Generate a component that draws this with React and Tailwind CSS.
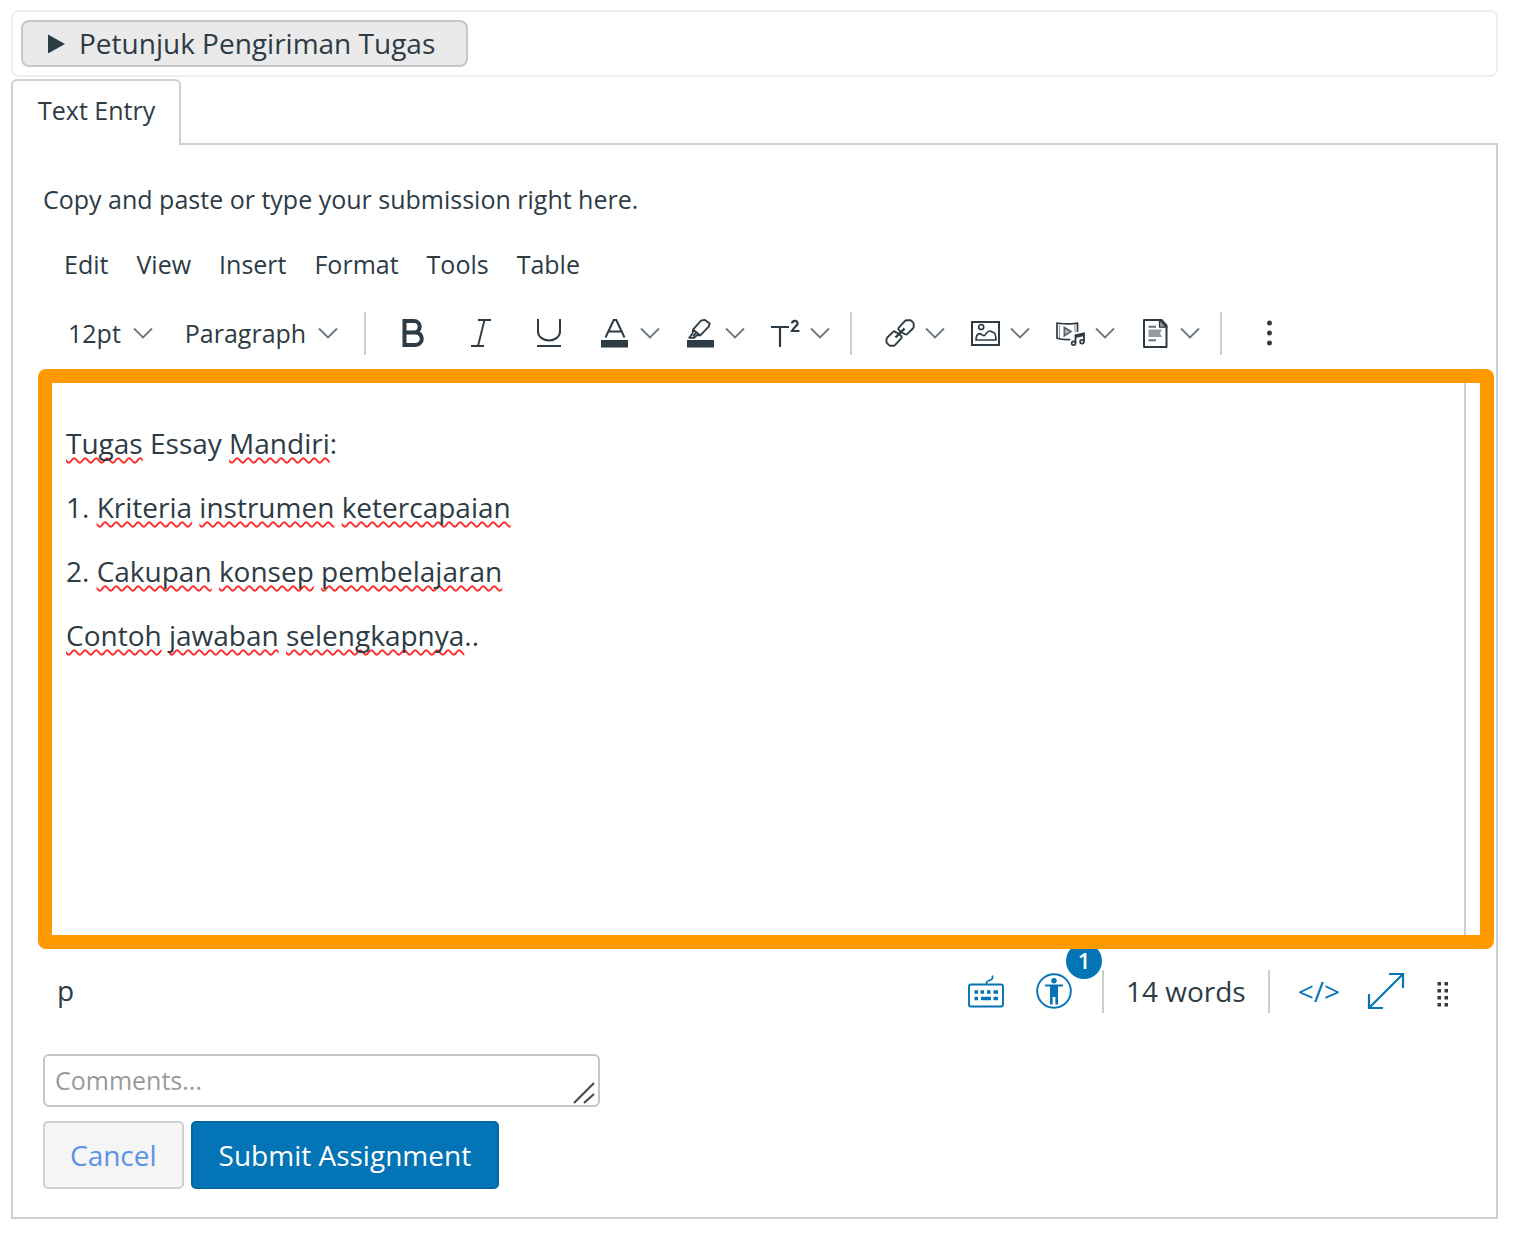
import React from "react";

function Chevron() {
  return (
    <svg className="h-5 w-5 shrink-0" viewBox="0 0 20 20" fill="none" stroke="#6b757d" strokeWidth="1.8" aria-hidden="true">
      <path d="M1 5.500l9 9 9-9" />
    </svg>
  );
}

function Icon({ children }) {
  return (
    <svg className="h-8 w-8 shrink-0" viewBox="0 0 32 32" fill="none" stroke="#2d3b45" strokeWidth="1.7" aria-hidden="true">
      {children}
    </svg>
  );
}

const icons = {
  bold: (
    <path strokeWidth="4" d="M7.500 4h9.500a5.600 5.600 0 0 1 0 11.400H7.500zM7.500 15.400h11a6.300 6.300 0 0 1 0 12.600h-11z" />
  ),
  italic: <path strokeWidth="1.9" d="M13 3h13M6 29h13M19.500 3l-6.500 26" />,
  underline: <path strokeWidth="2" d="M5 2v12.500a11 9 0 0 0 22 0V2M4 29h24" />,
  textColor: (
    <>
      <path strokeWidth="2" d="M6.500 20.500L14.700 3h2.600l8.200 17.500M10 14.500h12" />
      <path stroke="none" fill="#2d3b45" d="M2 23h27v7.500H2z" />
    </>
  ),
  highlight: (
    <>
      <path strokeWidth="1.8" strokeLinejoin="round" d="M20.500 2.800l5.200 3.800-1 3-8.400 8.800-3.200-.4-3 2.800H5.200l3.400-4.600.4-3.600 8-9zM9.300 12.800l6.400 5.200M9 19.500l3-4" />
      <path stroke="none" fill="#2d3b45" d="M3 23h27v7.500H3z" />
    </>
  ),
  superscript: (
    <>
      <path strokeWidth="2.200" d="M2 10h18M11 10v20" />
      <path strokeWidth="2.200" d="M23 6.500c.3-3.600 6.200-3.300 5.600.2-.3 2-3.600 3.400-5.600 7.300h7.500" />
    </>
  ),
  link: (
    <g strokeWidth="1.9" strokeLinejoin="round">
      <path d="M17.500 15.500l-2.700-2.700c-.6-.6-.6-1.500 0-2.100l6-6.500c.6-.6 1.200-.9 2-.9h3.300c.6 0 1 .2 1.400.6l1.700 1.800c.4.4.5.8.5 1.400v2.600c0 .7-.3 1.300-.8 1.800l-5.800 5.600c-.6.6-1.500.6-2.100 0z" />
      <path d="M14.500 16.500l2.700 2.700c.6.6.6 1.500 0 2.100l-6 6.500c-.6.6-1.200.9-2 .9H6.400c-.6 0-1-.2-1.400-.6l-2-2c-.4-.4-.5-.8-.5-1.400v-2.400c0-.7.3-1.300.8-1.800l5.800-5.600c.6-.6 1.500-.6 2.100 0z" />
      <path strokeWidth="2.400" d="M11.500 20.500l9-9" />
    </g>
  ),
  image: (
    <>
      <path strokeWidth="2" d="M3 5h27v23H3z" />
      <circle cx="12.200" cy="10" r="2.500" />
      <path strokeLinejoin="round" d="M7 23c0-3.500 1-5.800 3.400-6.400 2 .2 2.600 2 4.600 2 2.200-.3 2.400-4.600 5.800-4.600 1.600 0 2.200 1.400 3.600 1.400 2 .2 2.400 3.600 2.600 7.600z" />
    </>
  ),
  media: (
    <>
      <path stroke="#9aa1a6" strokeWidth="1.200" d="M5.500 7.500v14M21 8v7.500" />
      <path strokeLinejoin="round" d="M16.500 22.500c-5 .2-10 0-13.500-1.200V6c3.500 1 17 1.200 20.500 0v9" />
      <path fill="#b4babe" stroke="#55616a" strokeWidth="1.600" d="M10.300 10.500v8.200l6.700-4.100z" />
      <path strokeWidth="1.800" d="M21.500 26.500v-8.200l8.500-2v8.500M21.500 20l8.500-2" />
      <circle cx="19.600" cy="26.300" r="1.900" />
      <circle cx="28" cy="24.700" r="1.900" />
    </>
  ),
  document: (
    <>
      <path strokeWidth="2" strokeLinejoin="round" d="M5 3h17.500l5 5.500V30H5z" />
      <path fill="#9aa1a6" strokeWidth="1.300" d="M20.500 3v7.200h7z" />
      <path stroke="none" fill="#959da3" d="M9.500 12.500H23l-2 3.800 2 3.700H9.500z" />
      <path stroke="#66717a" strokeWidth="2" d="M9.500 9.700H17M9.500 23.300H17" />
    </>
  ),
  more: (
    <g stroke="none" fill="#2d3b45">
      <circle cx="15.500" cy="6" r="2.500" />
      <circle cx="15.500" cy="16" r="2.500" />
      <circle cx="15.500" cy="26" r="2.500" />
    </g>
  ),
};

function Separator() {
  return <span className="h-[43px] w-0.5 shrink-0 bg-[#ccd1d5]" />;
}

function ToolButton({ icon, label, menu }) {
  return (
    <button type="button" aria-label={label} className="flex items-center gap-[9px]">
      <Icon>{icons[icon]}</Icon>
      {menu && <Chevron />}
    </button>
  );
}

function ToolSelect({ label, value, options }) {
  return (
    <label className="flex items-center gap-3">
      <select aria-label={label} defaultValue={value} className="field-sizing-content appearance-none bg-transparent leading-8 outline-none">
        {options.map((o) => (
          <option key={o}>{o}</option>
        ))}
      </select>
      <Chevron />
    </label>
  );
}

function Misspelled({ children }) {
  return (
    <span className="underline decoration-[#ff2a2a] decoration-wavy decoration-2 underline-offset-[3px] [text-decoration-skip-ink:none]">
      {children}
    </span>
  );
}

function EditorToolbar() {
  return (
    <div role="toolbar" aria-label="Formatting" className="ml-[55px] mt-3 flex h-16 items-center text-[25px]">
      <div className="flex items-center gap-8">
        <ToolSelect label="Font size" value="12pt" options={["8pt", "10pt", "12pt", "14pt", "18pt"]} />
        <ToolSelect label="Block style" value="Paragraph" options={["Paragraph", "Heading 2", "Heading 3"]} />
      </div>
      <div className="ml-[26px] flex items-center">
        <Separator />
        <div className="ml-[31px] flex items-center gap-9">
          <ToolButton icon="bold" label="Bold" />
          <ToolButton icon="italic" label="Italic" />
          <ToolButton icon="underline" label="Underline" />
        </div>
        <div className="ml-[34px] mr-5 flex items-center gap-6">
          <ToolButton icon="textColor" label="Text colour" menu />
          <ToolButton icon="highlight" label="Highlight colour" menu />
          <ToolButton icon="superscript" label="Superscript" menu />
        </div>
        <Separator />
        <div className="ml-8 mr-5 flex items-center gap-6">
          <ToolButton icon="link" label="Links" menu />
          <ToolButton icon="image" label="Images" menu />
          <ToolButton icon="media" label="Media" menu />
          <ToolButton icon="document" label="Documents" menu />
        </div>
        <Separator />
        <div className="ml-8">
          <ToolButton icon="more" label="More" />
        </div>
      </div>
    </div>
  );
}

function EditorContent() {
  return (
    <div className="relative z-10 ml-[25px] mr-0.5 mt-1 h-[580px] rounded-lg border-[14px] border-[#ff9900] bg-white pr-3.5">
      <div
        contentEditable
        suppressContentEditableWarning
        role="textbox"
        aria-label="Submission"
        spellCheck={false}
        className="h-full border-r-2 border-[#ccd1d5] px-3.5 pt-10 text-[28px] leading-10 outline-none"
      >
        <p className="mb-6"><Misspelled>Tugas</Misspelled> Essay <Misspelled>Mandiri</Misspelled>:</p>
        <p className="mb-6">1. <Misspelled>Kriteria</Misspelled> <Misspelled>instrumen</Misspelled> <Misspelled>ketercapaian</Misspelled></p>
        <p className="mb-6">2. <Misspelled>Cakupan</Misspelled> <Misspelled>konsep</Misspelled> <Misspelled>pembelajaran</Misspelled></p>
        <p><Misspelled>Contoh</Misspelled> <Misspelled>jawaban</Misspelled> <Misspelled>selengkapnya</Misspelled>..</p>
      </div>
    </div>
  );
}

function StatusBar() {
  return (
    <div className="ml-11 mr-[45px] mt-2.5 flex h-16 items-center justify-between text-[28px]">
      <span className="pb-0.5">p</span>
      <div className="flex items-center text-[#0374b5]">
        <button type="button" aria-label="Keyboard shortcuts">
          <svg className="h-10 w-10" viewBox="0 0 40 40" fill="none" stroke="currentColor" strokeWidth="1.900" aria-hidden="true">
            <rect x="3" y="13.500" width="34" height="22" rx="2" />
            <path d="M20.500 13v-1.500c0-2 6-2 6-4.500V4.500" strokeWidth="1.700" />
            <path strokeWidth="3.400" d="M8.500 21h3.500M14.500 21h3.500M21 21h3.500M27.500 21h4.500M8.500 27.500h3.500M15 27.500h10M27.500 27.500h4.500" />
          </svg>
        </button>
        <button type="button" aria-label="Accessibility checker, 1 issue" className="relative ml-7">
          <svg className="h-10 w-10" viewBox="0 0 40 40" fill="none" stroke="currentColor" strokeWidth="1.900" aria-hidden="true">
            <circle cx="20" cy="20" r="16.800" />
            <circle cx="20" cy="9.800" r="2.700" fill="currentColor" stroke="none" />
            <path strokeWidth="2" d="M11 14.500h18" />
            <path fill="currentColor" stroke="none" d="M16 14h8v19.500h-2.600V26h-2.800v7.500H16z" />
          </svg>
          <span className="absolute -top-7 left-8 flex h-9 w-9 items-center justify-center rounded-full bg-[#0374b5] pb-0.5 text-[22px] font-semibold text-white">
            1
          </span>
        </button>
        <span className="ml-7 h-[43px] w-0.5 bg-[#ccc]" />
        <span className="mx-[22px] text-[#2d3b45]">14 words</span>
        <span className="h-[43px] w-0.5 bg-[#ccc]" />
        <button type="button" aria-label="View HTML" className="ml-7">
          &lt;/&gt;
        </button>
        <button type="button" aria-label="Fullscreen" className="ml-[26px]">
          <svg className="h-10 w-10" viewBox="0 0 40 40" fill="none" stroke="currentColor" strokeWidth="2.200" aria-hidden="true">
            <path d="M3 37L37 3M23 3h14v14M3 23v14h14" />
          </svg>
        </button>
        <svg className="ml-[29px] h-8 w-4" viewBox="0 0 16 32" fill="#2d3b45" aria-hidden="true">
          {[7, 14, 21, 28].map((y) => (
            <React.Fragment key={y}>
              <rect x="2.500" y={y} width="3.500" height="3.500" />
              <rect x="9.500" y={y} width="3.500" height="3.500" />
            </React.Fragment>
          ))}
        </svg>
      </div>
    </div>
  );
}

export default function App() {
  return (
    <main className="bg-white pb-7 pl-[11px] pr-[19px] pt-2.5 font-['Open_Sans',sans-serif] text-[#2d3b45]">
      <div className="rounded-lg border-2 border-[#eee] p-2">
        <button type="button" className="flex h-[47px] items-center gap-3.5 rounded-lg border-2 border-[#c7c7c7] bg-[#eaeaea] pb-0.5 pl-[25px] pr-[31px] text-[28px]">
          <svg className="h-5 w-[17px]" viewBox="0 0 17 20" fill="#2d3b45" aria-hidden="true">
            <path d="M0 1.500v19l17-9.500z" />
          </svg>
          Petunjuk Pengiriman Tugas
        </button>
      </div>

      <div role="tablist" className="mt-0.5 flex">
        <button
          type="button"
          role="tab"
          aria-selected="true"
          className="relative -mb-0.5 h-[66px] rounded-t-md border-2 border-b-0 border-[#ccd1d5] bg-white pb-1 pl-[25px] pr-6 text-[25px]"
        >
          Text Entry
        </button>
      </div>

      <section className="border-2 border-[#ccd1d5] pb-7">
        <p className="mt-[38px] px-[30px] text-[25px] leading-8">Copy and paste or type your submission right here.</p>
        <nav aria-label="Editor menu" className="ml-[51px] mt-[26px] flex h-12 items-center gap-7 text-[25px]">
          {["Edit", "View", "Insert", "Format", "Tools", "Table"].map((m) => (
            <button key={m} type="button">{m}</button>
          ))}
        </nav>
        <EditorToolbar />
        <EditorContent />
        <StatusBar />

        <form className="ml-[30px] mt-[31px]" onSubmit={(e) => e.preventDefault()}>
          <div className="relative w-[557px] max-w-full">
            <textarea
              rows={1}
              aria-label="Comments"
              placeholder="Comments..."
              className="block h-[53px] w-full resize-none overflow-hidden rounded-md border-2 border-[#c7c7c7] px-2.5 py-2 text-[25px] leading-8 outline-none placeholder:text-[#9a9a9a]"
            />
            <svg className="absolute bottom-0.5 right-1 h-6 w-6" viewBox="0 0 24 24" stroke="#4a4a4a" strokeWidth="2.200" aria-hidden="true">
              <path d="M2 22L22 2M12 22l10-9" />
            </svg>
          </div>
          <div className="mt-3.5 flex gap-[7px] text-[28px]">
            <button type="button" className="h-[68px] rounded-[5px] border-2 border-[#ccd1d5] bg-[#f5f5f5] px-[25px] text-[#5b93e6]">
              Cancel
            </button>
            <button type="submit" className="h-[68px] rounded-[5px] border-2 border-[#0268a2] bg-[#0374b5] px-[26px] text-white">
              Submit Assignment
            </button>
          </div>
        </form>
      </section>
    </main>
  );
}
